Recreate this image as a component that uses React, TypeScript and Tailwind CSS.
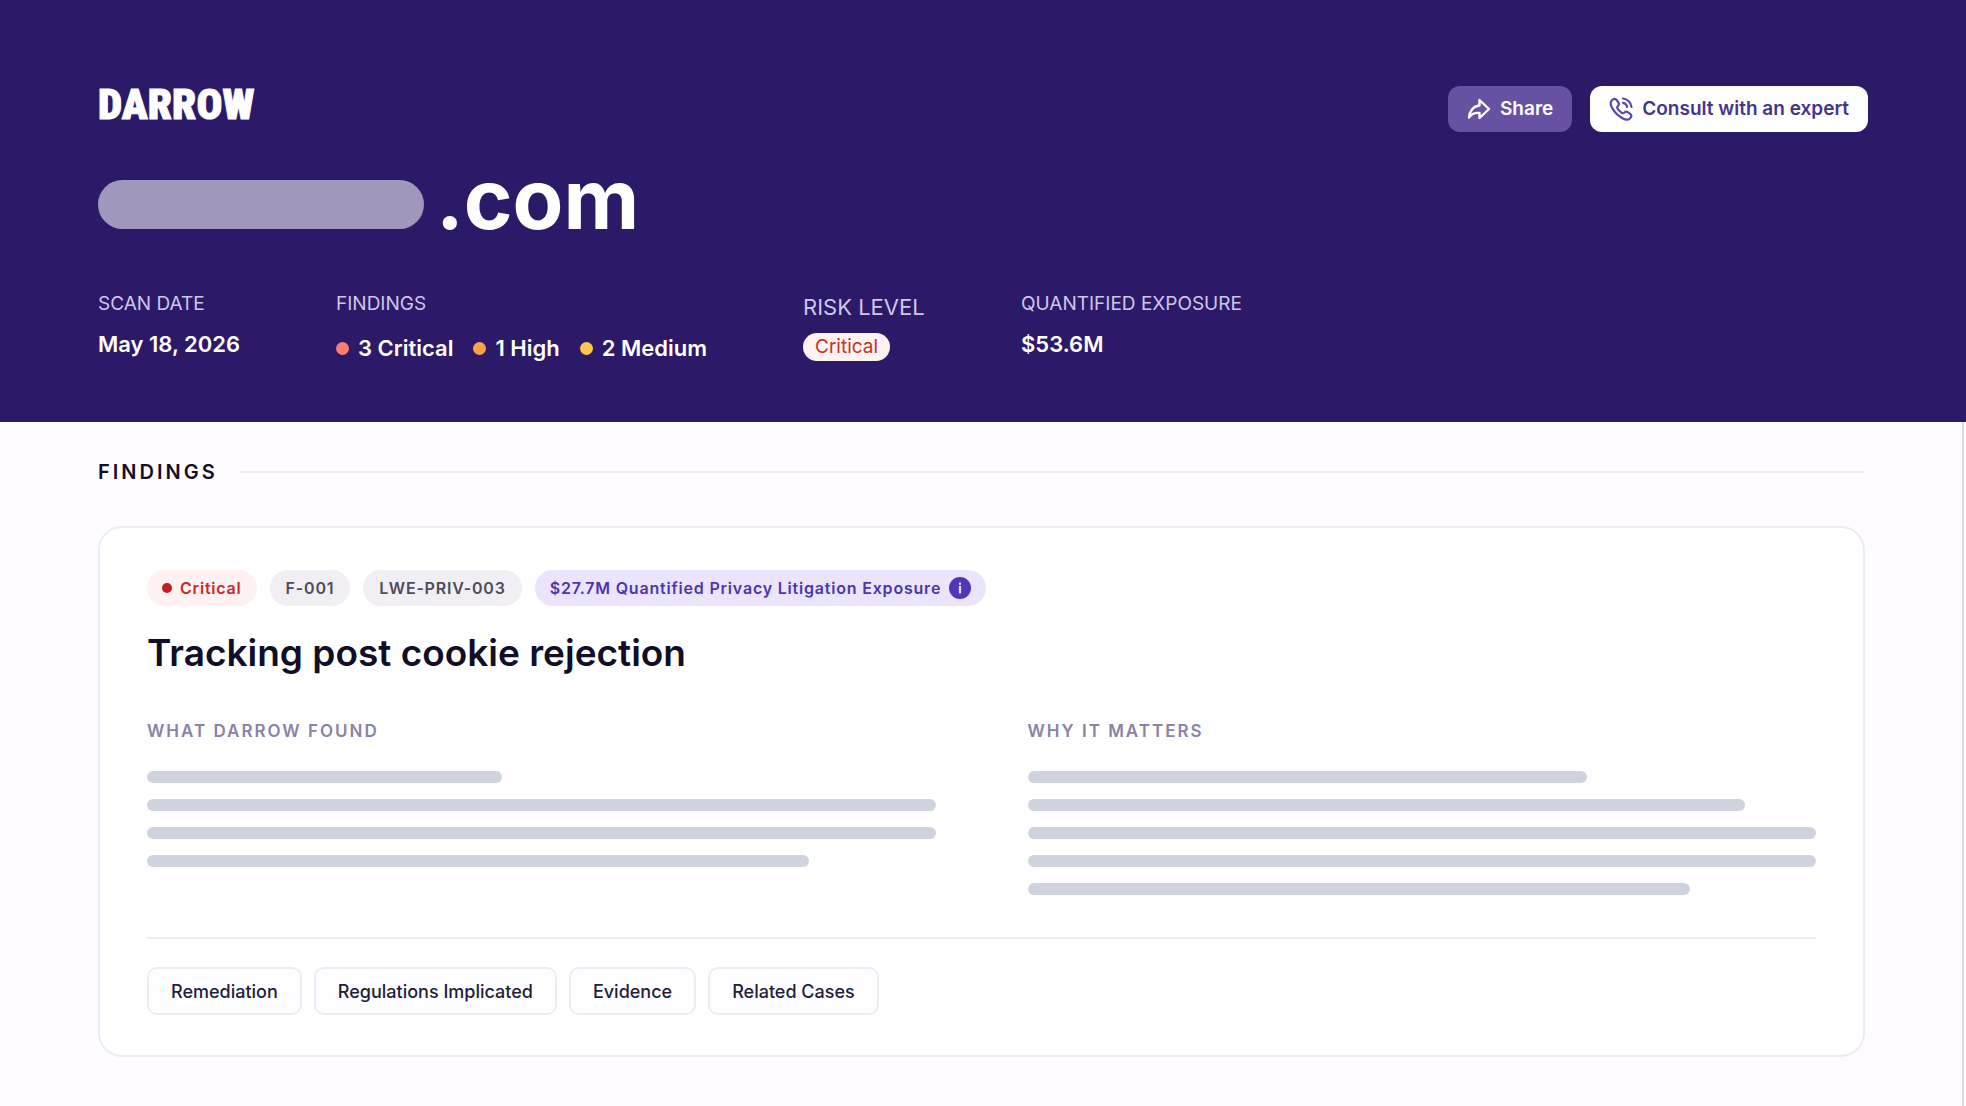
import clsx from 'clsx';

interface SeverityType {
  label: string;
  dot: string;
}

interface FindingColumnType {
  title: string;
  lines: string[];
}

const severities: SeverityType[] = [
  { label: '3 Critical', dot: 'bg-[#fb7d72]' },
  { label: '1 High', dot: 'bg-[#fea14b]' },
  { label: '2 Medium', dot: 'bg-[#fdc74b]' },
];

const columns: FindingColumnType[] = [
  { title: 'What Darrow found', lines: ['w-[45%]', 'w-full', 'w-full', 'w-[84%]'] },
  { title: 'Why it matters', lines: ['w-[71%]', 'w-[91%]', 'w-full', 'w-full', 'w-[84%]'] },
];

const actions = ['Remediation', 'Regulations Implicated', 'Evidence', 'Related Cases'];

const ShareIcon = () => (
  <svg
    className="size-6"
    viewBox="0 0 24 24"
    fill="none"
    stroke="currentColor"
    strokeWidth="2.4"
    strokeLinejoin="round"
    aria-hidden="true"
  >
    <path d="M12.500 3 22 12l-9.500 9v-5C8 15.500 4.500 17 2 20.500 2.500 14 6.500 9 12.500 8.500Z" />
  </svg>
);

const PhoneIcon = () => (
  <svg
    className="size-6"
    viewBox="0 0 24 24"
    fill="none"
    stroke="#5a48ad"
    strokeWidth="2.2"
    strokeLinecap="round"
    strokeLinejoin="round"
    aria-hidden="true"
  >
    <path d="M2.500 3.800C4.500 1.500 6.300 1.300 7.600 3l1.900 2.700c.8 1.200.4 2.300-.8 3.500-1 1-.6 2 .7 3.500l2.300 2.400c1.500 1.300 2.500 1.500 3.500.6 1.200-1.100 2.300-1.400 3.500-.6l2.500 1.800c1.800 1.300 1.500 3.100-.7 4.900-1.700 1.300-4 1-7-.6-4-2.200-8.300-6.500-10.500-10.500-1.400-2.700-1.800-5.100-.5-6.900Z" />
    <path d="M14 1.500a9.500 9.500 0 0 1 8.500 8.500M14 5.800a5.200 5.200 0 0 1 4.200 4.200" />
  </svg>
);

const Header = () => (
  <header className="bg-[#2c1a69] px-[98px] pt-[86px] pb-[60px] text-white">
    <div className="flex items-start justify-between">
      <div className="font-['Roboto_Condensed','Roboto',sans-serif] text-[43px] leading-[36px] font-black [-webkit-text-stroke:1px_white]">
        DARROW
      </div>
      <div className="flex gap-[18px]">
        <button
          type="button"
          className="flex h-[46px] items-center gap-[9px] rounded-xl bg-[#6751a2] px-[19px] text-[19px] font-semibold"
        >
          <ShareIcon />
          Share
        </button>
        <button
          type="button"
          className="flex h-[46px] items-center gap-[9px] rounded-xl bg-white px-[19px] text-[19px] font-semibold text-[#45358a]"
        >
          <PhoneIcon />
          Consult with an expert
        </button>
      </div>
    </div>

    <h1 className="mt-[31px] flex items-baseline gap-3 text-[83px] leading-[72px] font-bold">
      <span className="h-[49px] w-[326px] rounded-full bg-[#a196bb]" />
      .com
    </h1>

    <dl className="mt-[57px] flex items-start text-[22px] leading-7 font-semibold">
      <div className="w-[238px]">
        <dt className="text-[19px] leading-6 font-normal text-[#cfc6ea]">SCAN DATE</dt>
        <dd className="mt-[14px]">May 18, 2026</dd>
      </div>
      <div className="w-[467px]">
        <dt className="text-[19px] leading-6 font-normal text-[#cfc6ea]">FINDINGS</dt>
        <dd className="mt-[18px] flex gap-5">
          {severities.map((_severity) => (
            <span key={_severity.label} className="flex items-center gap-[9px]">
              <span className={clsx('size-[13px] rounded-full', _severity.dot)} />
              {_severity.label}
            </span>
          ))}
        </dd>
      </div>
      <div className="w-[218px]">
        <dt className="text-[22px] leading-[30px] font-normal text-[#cfc6ea]">RISK LEVEL</dt>
        <dd className="mt-[11px] flex">
          <span className="rounded-full bg-[#fff3f1] px-3 text-[19px] font-normal text-[#c9301f]">
            Critical
          </span>
        </dd>
      </div>
      <div>
        <dt className="text-[19px] leading-6 font-normal text-[#cfc6ea]">QUANTIFIED EXPOSURE</dt>
        <dd className="mt-[14px]">$53.6M</dd>
      </div>
    </dl>
  </header>
);

const FindingCard = () => (
  <article className="mt-10 rounded-3xl border-2 border-[#eeebf7] bg-white px-[47px] pt-[42px] pb-10">
    <div className="flex items-center gap-[13px] text-[16px] font-semibold tracking-wider">
      <span className="flex h-9 items-center gap-2 rounded-full bg-[#fff0f1] px-[15px] text-[#c52a26]">
        <span className="size-[10px] rounded-full bg-[#c01f1f]" />
        Critical
      </span>
      <span className="flex h-9 items-center rounded-full bg-[#f1eff4] px-4 text-[#4f4a5c]">
        F-001
      </span>
      <span className="flex h-9 items-center rounded-full bg-[#f1eff4] px-4 text-[#4f4a5c]">
        LWE-PRIV-003
      </span>
      <span className="flex h-9 items-center gap-2 rounded-full bg-[#ebe4fd] px-[15px] text-[#4d35b0]">
        $27.7M Quantified Privacy Litigation Exposure
        <svg className="size-[22px]" viewBox="0 0 22 22" aria-hidden="true">
          <circle cx="11" cy="11" r="11" fill="#5236b8" />
          <path d="M9.900 5.500h2.200v2.200H9.900zM9.900 9h2.200v7.500H9.900z" fill="#e4dcfb" />
        </svg>
      </span>
    </div>

    <h3 className="mt-6 text-[37px] leading-[46px] font-semibold text-[#120d29]">
      Tracking post cookie rejection
    </h3>

    <div className="mt-[43px] grid grid-cols-2 gap-[92px]">
      {columns.map((_column) => (
        <section key={_column.title}>
          <h4 className="text-[17px] leading-6 font-semibold tracking-[2px] text-[#8b82a8] uppercase">
            {_column.title}
          </h4>
          <div className="mt-7 flex flex-col gap-4">
            {_column.lines.map((_width, index) => (
              <div key={index} className={clsx('h-3 rounded-full bg-[#cfd3df]', _width)} />
            ))}
          </div>
        </section>
      ))}
    </div>

    <div className="mt-[42px] flex gap-3 border-t-2 border-[#eeebf7] pt-7">
      {actions.map((_action) => (
        <button
          key={_action}
          type="button"
          className="h-12 rounded-[10px] border-2 border-[#eeebf7] bg-[#fefdff] px-[22px] text-[18px] font-medium text-[#231d3a]"
        >
          {_action}
        </button>
      ))}
    </div>
  </article>
);

const App = () => (
  <div className="flex min-h-screen flex-col bg-[#fefcff] font-['Inter',sans-serif]">
    <Header />
    <main className="mr-[2px] grow border-r-2 border-[#dad9dc] pr-[97px] pb-12 pl-[98px]">
      <div className="flex items-center gap-[22px] pt-9">
        <h2 className="text-[20px] leading-7 font-semibold tracking-[3px] text-[#120d29]">
          FINDINGS
        </h2>
        <hr className="grow border-t-2 border-[#f0edf7]" />
      </div>
      <FindingCard />
    </main>
  </div>
);

export default App;
